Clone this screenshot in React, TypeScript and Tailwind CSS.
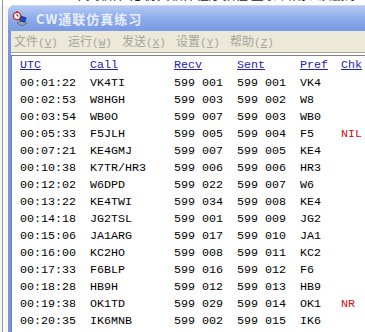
const rows: [string, string, string, string, string, string][] = [
  ["00:01:22", "VK4TI", "599 001", "599 001", "VK4", ""],
  ["00:02:53", "W8HGH", "599 003", "599 002", "W8", ""],
  ["00:03:54", "WB0O", "599 007", "599 003", "WB0", ""],
  ["00:05:33", "F5JLH", "599 005", "599 004", "F5", "NIL"],
  ["00:07:21", "KE4GMJ", "599 007", "599 005", "KE4", ""],
  ["00:10:38", "K7TR/HR3", "599 006", "599 006", "HR3", ""],
  ["00:12:02", "W6DPD", "599 022", "599 007", "W6", ""],
  ["00:13:22", "KE4TWI", "599 034", "599 008", "KE4", ""],
  ["00:14:18", "JG2TSL", "599 001", "599 009", "JG2", ""],
  ["00:15:06", "JA1ARG", "599 017", "599 010", "JA1", ""],
  ["00:16:00", "KC2HO", "599 008", "599 011", "KC2", ""],
  ["00:17:33", "F6BLP", "599 016", "599 012", "F6", ""],
  ["00:18:28", "HB9H", "599 012", "599 013", "HB9", ""],
  ["00:19:38", "OK1TD", "599 029", "599 014", "OK1", "NR"],
  ["00:20:35", "IK6MNB", "599 002", "599 015", "IK6", ""],
];

const menus = [
  ["文件", "V"],
  ["运行", "W"],
  ["发送", "X"],
  ["设置", "Y"],
  ["帮助", "Z"],
];

function AppIcon() {
  return (
    <svg width="16" height="16" viewBox="0 0 16 16" className="shrink-0">
      <path d="M5 12 L10 9 L15 12 L10 15 Z" fill="#9aa3ad" stroke="#5d6670" strokeWidth="0.8" />
      <rect x="8.5" y="6" width="5" height="4.5" fill="#1d4fd6" stroke="#0b2a88" strokeWidth="0.8" transform="rotate(20 11 8)" />
      <circle cx="5" cy="5" r="3.6" fill="#ffffff" stroke="#d22020" strokeWidth="1.4" />
      <path d="M5 3 V5 H6.6" stroke="#222" strokeWidth="0.8" fill="none" />
      <rect x="4" y="0.3" width="2" height="1.2" fill="#d22020" />
    </svg>
  );
}

function Cell({ w, children, className = "" }: { w: string; children: React.ReactNode; className?: string }) {
  return <div className={`${w} shrink-0 whitespace-pre ${className}`}>{children}</div>;
}

export default function App() {
  return (
    <div className="w-[365px] h-[332px] overflow-hidden bg-white flex flex-col font-['Liberation_Sans','Noto_Sans_CJK_SC',sans-serif]">
      {/* text of the page behind, clipped */}
      <div className="h-[5px] overflow-hidden flex shrink-0">
        <div className="w-[2px] shrink-0" />
        <div className="w-[1px] shrink-0 bg-[#9a9a9a]" />
        <div className="-mt-[13px] ml-[70px] h-[18px] text-[13px] leading-[13px] text-[#222] whitespace-nowrap font-['Noto_Sans_CJK_SC',sans-serif]">
          中文软件     化   仿真软件程序教程  登录  日期以及删除
        </div>
      </div>

      <div className="flex flex-1 min-h-0">
        {/* left gutter */}
        <div className="w-[8px] shrink-0 flex">
          <div className="w-[2px] bg-[#f4f4f4]" />
          <div className="w-[1px] bg-[#9a9a9a]" />
          <div className="flex-1 bg-[#f7f7f7]" />
        </div>

        {/* window */}
        <div className="flex-1 min-w-0 flex flex-col rounded-tl-[7px] overflow-hidden bg-[#7f92dc]">
          <div className="h-[26px] shrink-0 flex items-center gap-[8px] pl-[4px] bg-gradient-to-b from-[#b4c8f2] via-[#8eabea] to-[#7b9be3] border-t border-[#c9d7f5]">
            <AppIcon />
            <span className="text-[13px] font-bold text-[#e6edfb] tracking-[1px] font-['Noto_Sans_CJK_SC',sans-serif]">
              CW通联仿真练习
            </span>
          </div>

          <div className="flex-1 min-h-0 flex pl-[3px]">
            <div className="flex-1 min-w-0 flex flex-col bg-[#ece9d8]">
              <div className="h-[21px] shrink-0 flex items-center pl-[3px] text-[12px] text-[#a4a49c] font-['Noto_Sans_CJK_SC',sans-serif]">
                {menus.map(([label, key]) => (
                  <div key={key} className="w-[54px] shrink-0 whitespace-nowrap">
                    {label}
                    <span className="font-['Liberation_Mono',monospace] text-[11px]">
                      (<span className="underline">{key}</span>)
                    </span>
                  </div>
                ))}
              </div>
              <div className="h-[1px] bg-[#aca899] shrink-0" />
              <div className="h-[2px] bg-white shrink-0" />
              <div className="flex-1 min-h-0 border-t border-l border-[#7f7f7f] bg-white pl-[8px] pt-[1px] font-['Liberation_Mono',monospace] text-[11.67px] text-black">
                <div className="h-[18px] flex items-center text-[#2222b0] underline">
                  <Cell w="w-[70px]">UTC</Cell>
                  <Cell w="w-[84px]">Call</Cell>
                  <Cell w="w-[63px]">Recv</Cell>
                  <Cell w="w-[63px]">Sent</Cell>
                  <Cell w="w-[41px]">Pref</Cell>
                  <Cell w="w-[40px]">Chk</Cell>
                </div>
                {rows.map((r) => (
                  <div key={r[0]} className="h-[17px] flex items-center">
                    <Cell w="w-[70px]">{r[0]}</Cell>
                    <Cell w="w-[84px]">{r[1]}</Cell>
                    <Cell w="w-[63px]">{r[2]}</Cell>
                    <Cell w="w-[63px]">{r[3]}</Cell>
                    <Cell w="w-[41px]">{r[4]}</Cell>
                    <Cell w="w-[40px]" className="text-[#d01010]">{r[5]}</Cell>
                  </div>
                ))}
              </div>
            </div>
          </div>
        </div>
      </div>
    </div>
  );
}
